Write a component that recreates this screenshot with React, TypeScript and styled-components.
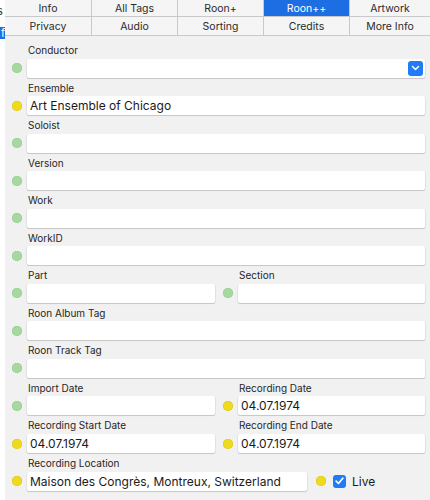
import React from 'react';
import styled, { createGlobalStyle } from 'styled-components';

const GlobalStyle = createGlobalStyle`
  html, body {
    margin: 0;
    padding: 0;
    background: #ffffff;
  }
  body {
    font-family: Inter, "Liberation Sans", sans-serif;
    -webkit-font-smoothing: antialiased;
  }
`;

const Page = styled.div`
  display: flex;
  width: 430px;
  height: 500px;
  overflow: hidden;
`;

const Sliver = styled.div`
  width: 5px;
  flex: none;
  overflow: hidden;
  background: #ffffff;
  display: flex;
  flex-direction: column;
`;

const SliverText = styled.span`
  margin-top: 4px;
  margin-left: -3px;
  font-size: 11px;
  line-height: 14px;
  color: #333;
`;

const SliverBadge = styled.span`
  margin-top: 9px;
  height: 12px;
  background: #1c6fe3;
  color: #fff;
  font-size: 11px;
  line-height: 12px;
  padding-left: 1px;
`;

const Main = styled.div`
  flex: 1;
  display: flex;
  flex-direction: column;
  background: #f1f1f1;
`;

const TabRow = styled.div<{ $height: number }>`
  display: grid;
  grid-template-columns: 87px 86px 86px 86px 1fr;
  height: ${p => p.$height}px;
  border-bottom: 1px solid #c9c9c9;
  box-sizing: border-box;
`;

const Tab = styled.div<{ $active?: boolean }>`
  display: flex;
  align-items: center;
  justify-content: center;
  font-size: 10.5px;
  color: ${p => (p.$active ? '#ffffff' : '#2b2b2b')};
  background: ${p => (p.$active ? '#1d6ee3' : '#f5f5f5')};
  border-right: 1px solid #c9c9c9;
  box-sizing: border-box;
  &:last-child {
    border-right: none;
  }
`;

const Form = styled.div`
  padding-top: 4px;
  display: grid;
  grid-auto-rows: 37.55px;
`;

const Row = styled.div`
  display: flex;
`;

const Field = styled.div<{ $width?: number }>`
  display: grid;
  grid-template-columns: 22px 1fr;
  grid-template-rows: 18.55px 19px;
  ${p => (p.$width ? `width: ${p.$width}px; flex: none;` : 'flex: 1;')}
  padding-right: ${p => (p.$width ? 1 : 5)}px;
  box-sizing: border-box;
`;

const Label = styled.div`
  grid-column: 2;
  font-size: 10px;
  line-height: 21px;
  color: #262626;
  padding-left: 1px;
  white-space: nowrap;
`;

const Dot = styled.span<{ $on?: boolean }>`
  align-self: center;
  margin-left: 7px;
  width: 10px;
  height: 10px;
  border-radius: 50%;
  background: ${p => (p.$on ? '#efdb1b' : '#a7d8a2')};
  box-shadow: inset 0 0 0 0.5px ${p => (p.$on ? '#d9c416' : '#93c98e')};
`;

const Input = styled.div`
  position: relative;
  background: #ffffff;
  border-radius: 2px;
  box-shadow: 0 0.5px 0 0.5px rgba(0, 0, 0, 0.1), 0 1px 1px rgba(0, 0, 0, 0.08);
  font-size: 12px;
  line-height: 19px;
  color: #1a1a1a;
  padding-left: 3px;
  white-space: nowrap;
  overflow: hidden;
`;

const Popup = styled.span`
  position: absolute;
  right: 2px;
  top: 2px;
  width: 15px;
  height: 15px;
  border-radius: 3px;
  background: #1f7cf4;
  display: flex;
  align-items: center;
  justify-content: center;
`;

const Extra = styled.div`
  display: flex;
  align-items: center;
  padding-top: 18.55px;
  gap: 7px;
  flex: 1;
  padding-left: 8px;
`;

const CheckBox = styled.span`
  width: 13px;
  height: 13px;
  border-radius: 3px;
  background: #1f7cf4;
  display: flex;
  align-items: center;
  justify-content: center;
`;

const CheckLabel = styled.span`
  font-size: 12px;
  color: #1a1a1a;
  margin-left: -1px;
`;

const InlineDot = styled(Dot)`
  margin-left: 0;
`;

type FieldProps = {
  label: string;
  value?: string;
  on?: boolean;
  width?: number;
  popup?: boolean;
};

const FieldView: React.FC<FieldProps> = ({ label, value, on, width, popup }) => (
  <Field $width={width}>
    <Label>{label}</Label>
    <Dot $on={on} />
    <Input>
      {value}
      {popup && (
        <Popup>
          <svg width="9" height="6" viewBox="0 0 9 6">
            <path d="M1.5 1.5 L4.5 4.5 L7.5 1.5" stroke="#fff" strokeWidth="1.5" fill="none" strokeLinecap="round" strokeLinejoin="round" />
          </svg>
        </Popup>
      )}
    </Input>
  </Field>
);

const tabs1 = ['Info', 'All Tags', 'Roon+', 'Roon++', 'Artwork'];
const tabs2 = ['Privacy', 'Audio', 'Sorting', 'Credits', 'More Info'];

export default function App() {
  return (
    <Page>
      <GlobalStyle />
      <Sliver>
        <SliverText>s</SliverText>
        <SliverBadge>f</SliverBadge>
      </Sliver>
      <Main>
        <TabRow $height={17}>
          {tabs1.map(t => (
            <Tab key={t} $active={t === 'Roon++'}>{t}</Tab>
          ))}
        </TabRow>
        <TabRow $height={19}>
          {tabs2.map(t => (
            <Tab key={t}>{t}</Tab>
          ))}
        </TabRow>
        <Form>
          <Row><FieldView label="Conductor" popup /></Row>
          <Row><FieldView label="Ensemble" value="Art Ensemble of Chicago" on /></Row>
          <Row><FieldView label="Soloist" /></Row>
          <Row><FieldView label="Version" /></Row>
          <Row><FieldView label="Work" /></Row>
          <Row><FieldView label="WorkID" /></Row>
          <Row>
            <FieldView label="Part" width={211} />
            <FieldView label="Section" />
          </Row>
          <Row><FieldView label="Roon Album Tag" /></Row>
          <Row><FieldView label="Roon Track Tag" /></Row>
          <Row>
            <FieldView label="Import Date" width={211} />
            <FieldView label="Recording Date" value="04.07.1974" on />
          </Row>
          <Row>
            <FieldView label="Recording Start Date" value="04.07.1974" on width={211} />
            <FieldView label="Recording End Date" value="04.07.1974" on />
          </Row>
          <Row>
            <FieldView label="Recording Location" value="Maison des Congrès, Montreux, Switzerland" on width={303} />
            <Extra>
              <InlineDot $on />
              <CheckBox>
                <svg width="9" height="8" viewBox="0 0 9 8">
                  <path d="M1.2 4.2 L3.5 6.5 L7.8 1.2" stroke="#fff" strokeWidth="1.7" fill="none" strokeLinecap="round" strokeLinejoin="round" />
                </svg>
              </CheckBox>
              <CheckLabel>Live</CheckLabel>
            </Extra>
          </Row>
        </Form>
      </Main>
    </Page>
  );
}
